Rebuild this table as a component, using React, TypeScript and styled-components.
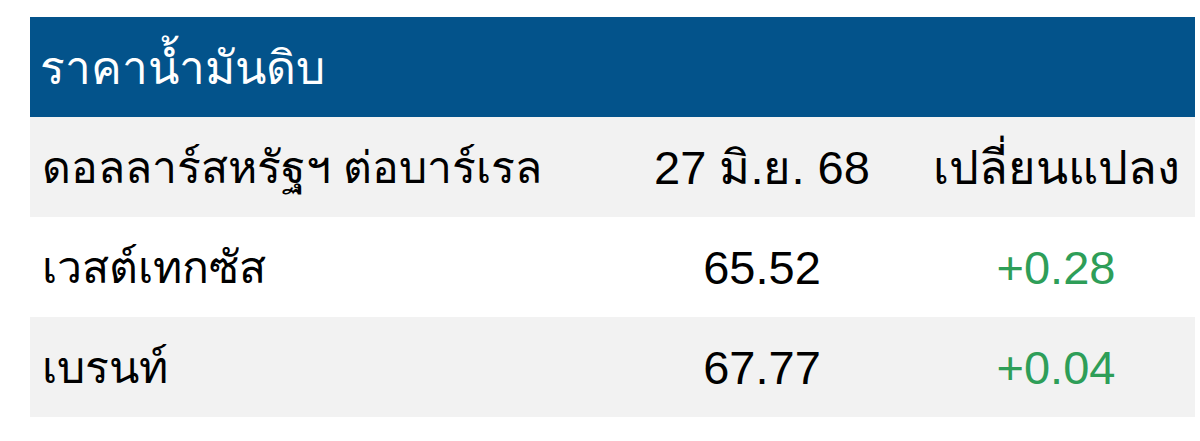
import React from 'react'
import styled, { createGlobalStyle } from 'styled-components'

interface RowType {
  name: string
  price: string
  change: string
}

const rows: RowType[] = [
  { name: 'เวสต์เทกซัส', price: '65.52', change: '+0.28' },
  { name: 'เบรนท์', price: '67.77', change: '+0.04' },
]

/*---> Component <---*/
export default function App() {
  return (
    <>
      <GlobalStyle />
      <PageWrapper>
        <TableWrapper>
          <TitleBar>ราคาน้ำมันดิบ</TitleBar>
          <Row $shaded>
            <NameCell>ดอลลาร์สหรัฐฯ ต่อบาร์เรล</NameCell>
            <ValueCell>27 มิ.ย. 68</ValueCell>
            <ValueCell>เปลี่ยนแปลง</ValueCell>
          </Row>
          {rows.map((row, i) => (
            <Row key={row.name} $shaded={i % 2 === 1}>
              <NameCell>{row.name}</NameCell>
              <ValueCell>{row.price}</ValueCell>
              <ChangeCell>{row.change}</ChangeCell>
            </Row>
          ))}
        </TableWrapper>
      </PageWrapper>
    </>
  )
}

/*---> Styles <---*/

const GlobalStyle = createGlobalStyle`
  body {
    margin: 0;
    background: #ffffff;
    font-family: "Liberation Sans", Arial, sans-serif;
  }
`

const PageWrapper = styled.div`
  width: 1200px;
  height: 441px;
  padding: 17px 5px 0 30px;
  box-sizing: border-box;
`

const TableWrapper = styled.div`
  display: flex;
  flex-direction: column;
  width: 1165px;
`

const TitleBar = styled.div`
  height: 100px;
  background-color: #03538b;
  color: #ffffff;
  display: flex;
  align-items: center;
  padding-left: 10px;
  font-size: 46px;
`

const Row = styled.div<{ $shaded?: boolean }>`
  display: grid;
  grid-template-columns: 577px 310px 278px;
  align-items: center;
  height: 100px;
  background-color: ${({ $shaded }) => ($shaded ? '#f2f2f2' : '#ffffff')};
  color: #000000;
  font-size: 47px;
`

const NameCell = styled.div`
  padding-left: 12px;
  white-space: nowrap;
  font-size: 44.5px;
`

const ValueCell = styled.div`
  text-align: center;
  white-space: nowrap;
`

const ChangeCell = styled(ValueCell)`
  color: #2e9e58;
`
